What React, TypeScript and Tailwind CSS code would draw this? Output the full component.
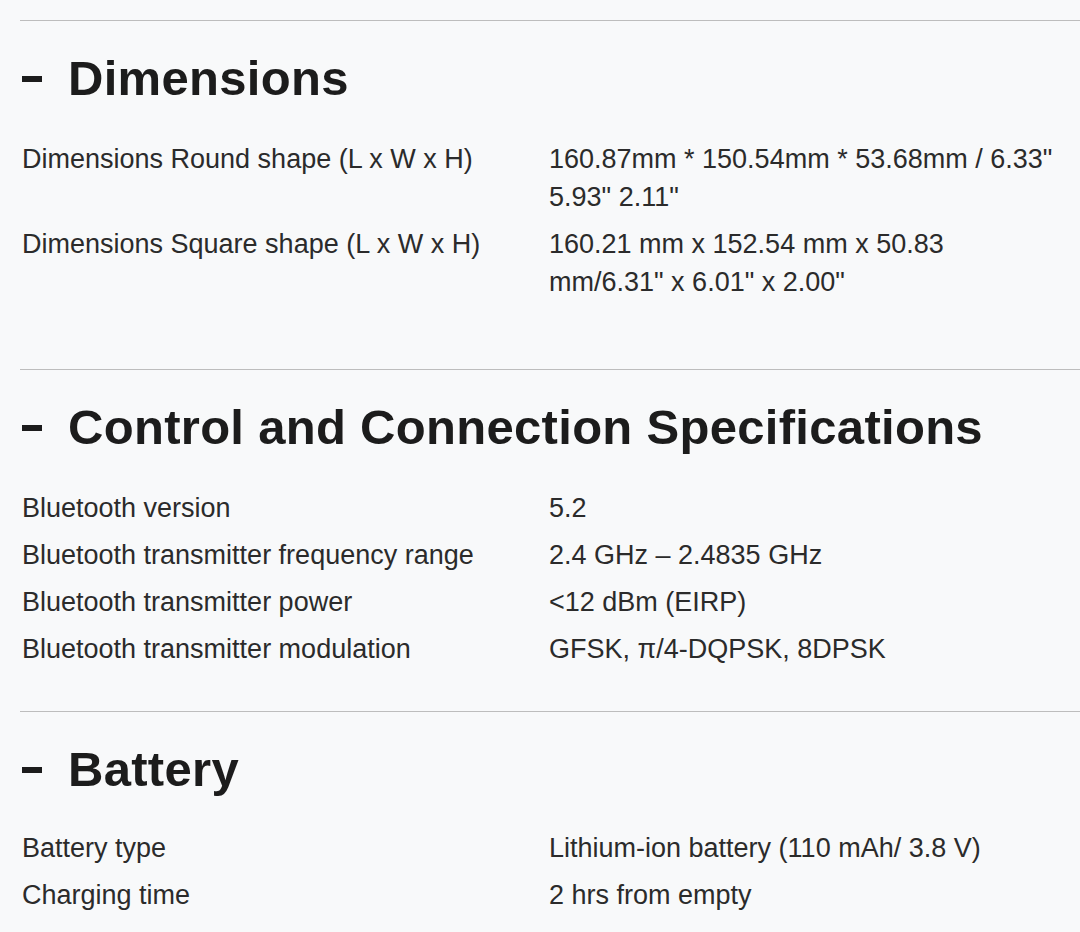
import React from "react";

type Spec = { label: string; value: string };

type Section = {
  title: string;
  specs: Spec[];
  bottomPad: string;
  listGap: string;
};

const sections: Section[] = [
  {
    title: "Dimensions",
    bottomPad: "pb-[64px]",
    listGap: "mt-[28px]",
    specs: [
      {
        label: "Dimensions Round shape (L x W x H)",
        value: '160.87mm * 150.54mm * 53.68mm / 6.33" 5.93" 2.11"',
      },
      {
        label: "Dimensions Square shape (L x W x H)",
        value: '160.21 mm x 152.54 mm x 50.83 mm/6.31" x 6.01" x 2.00"',
      },
    ],
  },
  {
    title: "Control and Connection Specifications",
    bottomPad: "pb-[39px]",
    listGap: "mt-[28px]",
    specs: [
      { label: "Bluetooth version", value: "5.2" },
      { label: "Bluetooth transmitter frequency range", value: "2.4 GHz – 2.4835 GHz" },
      { label: "Bluetooth transmitter power", value: "<12 dBm (EIRP)" },
      { label: "Bluetooth transmitter modulation", value: "GFSK, π/4-DQPSK, 8DPSK" },
    ],
  },
  {
    title: "Battery",
    bottomPad: "pb-[40px]",
    listGap: "mt-[26px]",
    specs: [
      { label: "Battery type", value: "Lithium-ion battery (110 mAh/ 3.8 V)" },
      { label: "Charging time", value: "2 hrs from empty" },
    ],
  },
];

const SpecSection = ({ section }: { section: Section }) => (
  <section className={section.bottomPad}>
    {/* divider */}
    <div className="ml-[20px] h-px bg-[#bdbdbd]" />

    {/* heading with collapse indicator */}
    <div className="mt-[28px] flex items-center pl-[22px] h-[58px]">
      <span className="block w-[20px] h-[6px] bg-[#1c1c1c] mr-[26px] mt-[2px]" />
      <h2 className="font-['Liberation_Sans',Arial,sans-serif] font-bold text-[49px] leading-[58px] text-[#1c1c1c] tracking-[0.3px]">
        {section.title}
      </h2>
    </div>

    <dl className={`${section.listGap} pl-[22px]`}>
      {section.specs.map((spec) => (
        <div key={spec.label} className="flex py-[4.5px] font-['Liberation_Sans',Arial,sans-serif] text-[27px] leading-[38px] text-[#2b2b2b]">
          <dt className="w-[527px] shrink-0">{spec.label}</dt>
          <dd className="w-[510px]">{spec.value}</dd>
        </div>
      ))}
    </dl>
  </section>
);

export default function App() {
  return (
    <div className="w-[1080px] h-[932px] overflow-hidden bg-[#f8f9fa] pt-[20px]">
      {sections.map((s) => (
        <SpecSection key={s.title} section={s} />
      ))}
    </div>
  );
}
